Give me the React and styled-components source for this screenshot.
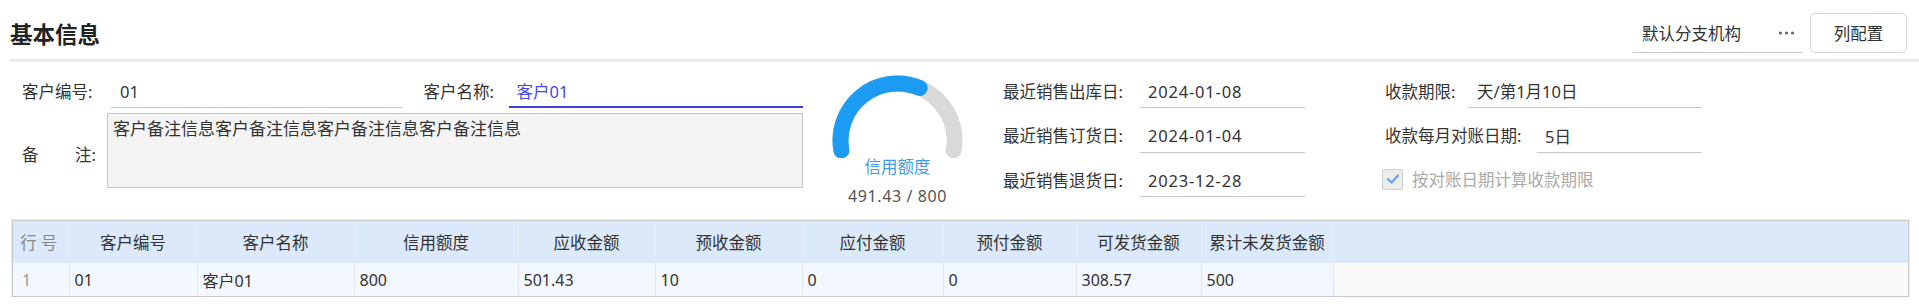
import React from "react";
import styled, { createGlobalStyle } from "styled-components";

const GlobalStyle = createGlobalStyle`
  html, body { margin: 0; padding: 0; background: #fff; }
  body {
    font-family: "Noto Sans", "Noto Sans CJK SC", sans-serif;
    color: #333;
    -webkit-font-smoothing: antialiased;
  }
  * { box-sizing: border-box; }
`;

const Page = styled.div`
  width: 1919px;
`;

const Header = styled.header`
  display: flex;
  align-items: center;
  justify-content: space-between;
  margin-left: 10px;
  height: 62px;
  padding: 13px 12px 6px 0;
  border-bottom: 3px solid #ececec;
`;

const Title = styled.h1`
  margin: 0;
  font-size: 22.5px;
  font-weight: 700;
  line-height: 40px;
  color: #222;
  font-family: "Noto Sans CJK SC", sans-serif;
`;

const Tools = styled.div`
  display: flex;
  align-items: center;
  gap: 8px;
`;

const Lookup = styled.div`
  width: 169px;
  height: 40px;
  display: flex;
  align-items: center;
  justify-content: space-between;
  padding: 0 7px 0 9px;
  border-bottom: 1px solid #c8c8c8;
  font-size: 16.5px;
  color: #333;
`;

const ConfigButton = styled.button`
  width: 97px;
  height: 40px;
  border: 1px solid #d8d8d8;
  border-radius: 5px;
  background: #fff;
  font-family: "Noto Sans CJK SC", sans-serif;
  font-size: 16.5px;
  color: #333;
  padding: 0;
`;

const Form = styled.div`
  display: flex;
  align-items: flex-start;
  padding: 13px 0 14px 22px;
`;

const LeftCol = styled.div`
  width: 781px;
`;

const FieldGrid = styled.div`
  display: grid;
  grid-template-columns: 1fr 1fr;
  column-gap: 22px;
`;

const Field = styled.div`
  display: flex;
  align-items: center;
  height: 33px;
  padding-left: ${(p) => p.$indent || 0}px;
`;

const Label = styled.span`
  flex: none;
  width: ${(p) => p.$w}px;
  font-size: 16.5px;
  line-height: 20px;
  color: #333;
  white-space: nowrap;
`;

const Value = styled.div`
  flex: 1;
  height: 33px;
  display: flex;
  align-items: center;
  padding-left: ${(p) => p.$pad || 9}px;
  font-size: 16.5px;
  letter-spacing: ${(p) => (p.$spaced ? "0.8px" : "0")};
  color: ${(p) => (p.$active ? "#4848e6" : "#333")};
  border-bottom: ${(p) => (p.$active ? "2px solid #4040d8" : "1px solid #c8c8c8")};
`;

const RemarkRow = styled.div`
  display: flex;
  align-items: center;
  margin-top: 5px;
`;

const SpreadLabel = styled.span`
  flex: none;
  width: 74px;
  margin-right: 11px;
  display: flex;
  justify-content: space-between;
  font-size: 16.5px;
  color: #333;
  margin-top: 7px;
`;

const RemarkBox = styled.div`
  width: 696px;
  height: 75px;
  background: #f4f4f4;
  border: 1px solid #c6c6c6;
  padding: 2px 5px;
  font-family: "Noto Sans CJK SC", sans-serif;
  font-size: 17px;
  line-height: 24px;
  color: #333;
`;

const GaugeCol = styled.div`
  width: 141px;
  margin-left: 24px;
  display: flex;
  flex-direction: column;
  align-items: center;
`;

const GaugeSvg = styled.svg`
  display: block;
`;

const GaugeLabel = styled.div`
  font-size: 16.5px;
  line-height: 18px;
  color: #3d9de8;
`;

const GaugeValue = styled.div`
  margin-top: 10px;
  font-size: 16px;
  line-height: 20px;
  color: #555;
  letter-spacing: 0.6px;
`;

const Stack = styled.div`
  width: ${(p) => p.$w}px;
  margin-left: ${(p) => p.$ml}px;
  display: flex;
  flex-direction: column;
  gap: 11.5px;
`;

const CheckRow = styled.label`
  display: flex;
  align-items: center;
  margin-top: 3px;
  font-size: 16.5px;
  color: #aaa;
`;

const CheckBox = styled.span`
  width: 21px;
  height: 21px;
  margin-right: 9px;
  border: 1px solid #cfcfcf;
  border-radius: 2px;
  background: #ececec;
  display: flex;
  align-items: center;
  justify-content: center;
`;

const TableWrap = styled.div`
  margin: 0 10px 0 12px;
  border: 1px solid #c8c8c8;
  box-shadow: 0 0 0 1px #ececec;
`;

const Table = styled.table`
  width: 100%;
  border-collapse: collapse;
  table-layout: fixed;
`;

const Th = styled.th`
  width: ${(p) => (p.$w ? `${p.$w}px` : "auto")};
  height: 42px;
  padding: 0 4px;
  background: #dce9fb;
  border-right: ${(p) => (p.$last ? "none" : "1px solid #e8eef7")};
  font-weight: 400;
  font-size: 16.5px;
  color: ${(p) => (p.$muted ? "#888" : "#333")};
  letter-spacing: ${(p) => (p.$muted ? "4px" : "0")};
  text-align: center;
  white-space: nowrap;
  overflow: hidden;
`;

const Td = styled.td`
  height: 33px;
  padding: 0 0 0 ${(p) => (p.$muted ? 9 : 5)}px;
  background: ${(p) => (p.$filler ? "#fafafa" : "#f3f8fe")};
  border-right: ${(p) => (p.$filler ? "none" : "1px solid #e2e7ee")};
  font-size: 16px;
  color: ${(p) => (p.$muted ? "#999" : "#333")};
  text-align: left;
  white-space: nowrap;
`;

const columns = [
  { title: "行号", w: 56, muted: true },
  { title: "客户编号", w: 128 },
  { title: "客户名称", w: 157 },
  { title: "信用额度", w: 164 },
  { title: "应收金额", w: 137 },
  { title: "预收金额", w: 147 },
  { title: "应付金额", w: 141 },
  { title: "预付金额", w: 133 },
  { title: "可发货金额", w: 125 },
  { title: "累计未发货金额", w: 132 },
];

const row = ["1", "01", "客户01", "800", "501.43", "10", "0", "0", "308.57", "500"];

function polar(cx, cy, r, deg) {
  const a = (deg * Math.PI) / 180;
  return [cx + r * Math.cos(a), cy - r * Math.sin(a)];
}

function arcPath(cx, cy, r, from, to) {
  const [x1, y1] = polar(cx, cy, r, from);
  const [x2, y2] = polar(cx, cy, r, to);
  const large = from - to > 180 ? 1 : 0;
  return `M ${x1.toFixed(2)} ${y1.toFixed(2)} A ${r} ${r} 0 ${large} 1 ${x2.toFixed(2)} ${y2.toFixed(2)}`;
}

function Gauge({ value, max }) {
  const start = 190;
  const end = -10;
  const cx = 70.5;
  const cy = 65.5;
  const r = 57;
  const ratio = Math.min(value / max, 1);
  const valEnd = start - (start - end) * ratio;
  return (
    <GaugeCol>
      <GaugeSvg width="141" height="83" viewBox="0 0 141 83">
        <path d={arcPath(cx, cy, r, start, end)} fill="none" stroke="#d9d9d9" strokeWidth="16" strokeLinecap="round" />
        <path d={arcPath(cx, cy, r, start, valEnd)} fill="none" stroke="#1b9bf2" strokeWidth="16" strokeLinecap="round" />
      </GaugeSvg>
      <GaugeLabel>信用额度</GaugeLabel>
      <GaugeValue>
        {value} / {max}
      </GaugeValue>
    </GaugeCol>
  );
}

function Dots() {
  return (
    <svg width="17" height="6" viewBox="0 0 17 6">
      <circle cx="2.5" cy="3" r="1.6" fill="#666" />
      <circle cx="8.5" cy="3" r="1.6" fill="#666" />
      <circle cx="14.5" cy="3" r="1.6" fill="#666" />
    </svg>
  );
}

export default function App() {
  return (
    <Page>
      <GlobalStyle />
      <Header>
        <Title>基本信息</Title>
        <Tools>
          <Lookup>
            <span>默认分支机构</span>
            <Dots />
          </Lookup>
          <ConfigButton>列配置</ConfigButton>
        </Tools>
      </Header>

      <Form>
        <LeftCol>
          <FieldGrid>
            <Field>
              <Label $w={89}>客户编号:</Label>
              <Value>01</Value>
            </Field>
            <Field>
              <Label $w={85}>客户名称:</Label>
              <Value $active $pad={8}>客户01</Value>
            </Field>
          </FieldGrid>
          <RemarkRow>
            <SpreadLabel>
              <span>备</span>
              <span>注:</span>
            </SpreadLabel>
            <RemarkBox>客户备注信息客户备注信息客户备注信息客户备注信息</RemarkBox>
          </RemarkRow>
        </LeftCol>

        <Gauge value={491.43} max={800} />

        <Stack $w={302} $ml={35}>
          <Field>
            <Label $w={137}>最近销售出库日:</Label>
            <Value $pad={8} $spaced>2024-01-08</Value>
          </Field>
          <Field>
            <Label $w={137}>最近销售订货日:</Label>
            <Value $pad={8} $spaced>2024-01-04</Value>
          </Field>
          <Field>
            <Label $w={137}>最近销售退货日:</Label>
            <Value $pad={8} $spaced>2023-12-28</Value>
          </Field>
        </Stack>

        <Stack $w={320} $ml={77}>
          <Field $indent={3}>
            <Label $w={83}>收款期限:</Label>
            <Value $pad={9}>天/第1月10日</Value>
          </Field>
          <Field $indent={3}>
            <Label $w={152}>收款每月对账日期:</Label>
            <Value $pad={8}>5日</Value>
          </Field>
          <CheckRow>
            <CheckBox>
              <svg width="14" height="12" viewBox="0 0 14 12">
                <path d="M2 6.2 L5.5 9.5 L12 2.5" fill="none" stroke="#6d9fe6" strokeWidth="2.2" strokeLinecap="round" strokeLinejoin="round" />
              </svg>
            </CheckBox>
            按对账日期计算收款期限
          </CheckRow>
        </Stack>
      </Form>

      <TableWrap>
        <Table>
          <thead>
            <tr>
              {columns.map((c) => (
                <Th key={c.title} $w={c.w} $muted={c.muted}>
                  {c.title}
                </Th>
              ))}
              <Th $last />
            </tr>
          </thead>
          <tbody>
            <tr>
              {row.map((v, i) => (
                <Td key={i} $muted={i === 0}>
                  {v}
                </Td>
              ))}
              <Td $filler />
            </tr>
          </tbody>
        </Table>
      </TableWrap>
    </Page>
  );
}
